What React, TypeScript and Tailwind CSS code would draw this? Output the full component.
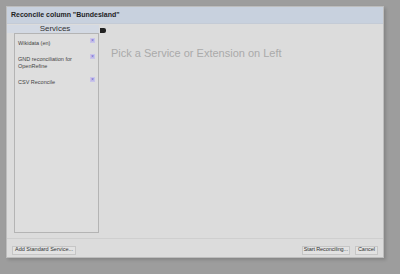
import React from 'react'

const services = [
  { name: 'Wikidata (en)', lines: ['Wikidata (en)'] },
  { name: 'GND', lines: ['GND reconciliation for', 'OpenRefine'] },
  { name: 'CSV', lines: ['CSV Reconcile'] },
]

function RemoveIcon() {
  return (
    <span className="flex h-[5px] w-[5px] items-center justify-center bg-[#c9c4ea] text-[5px] leading-none text-[#6b5fd0]">
      ×
    </span>
  )
}

export default function App() {
  return (
    <div className="h-[274px] w-[400px] overflow-hidden bg-[#9d9d9d] pl-[6px] pt-[6px] font-['Liberation_Sans',Arial,sans-serif]">
      <div className="flex h-[252px] w-[378px] flex-col border border-[#bdbdbd] bg-[#dcdcdc] shadow-[2px_2px_3px_rgba(0,0,0,0.15)]">
        <div className="flex h-[17px] items-center border-b border-[#c4cbd6] bg-[#c8d1de] pl-[4px] pt-[1px] text-[7px] font-bold text-[#1e1e1e]">
          Reconcile column "Bundesland"
        </div>
        <div className="flex flex-1 pt-[1px]">
          <div className="flex w-[92px] flex-col">
            <div className="flex h-[8px] items-center justify-center bg-[#d3d9e3] pl-[4px] text-[8px] leading-none text-[#333]">
              Services
            </div>
            <div className="ml-[7px] flex h-[200px] flex-col border border-[#b4b4b4] bg-[#dedede] px-[3px] pt-[6px] text-[5.5px] leading-[7px] text-[#444]">
              {services.map((s) => (
                <div key={s.name} className="flex justify-between pb-[9px]">
                  <div>
                    {s.lines.map((l) => (
                      <div key={l}>{l}</div>
                    ))}
                  </div>
                  <div className="-mt-[2px]">
                    <RemoveIcon />
                  </div>
                </div>
              ))}
            </div>
          </div>
          <div className="flex flex-1 flex-col">
            <div className="ml-[1px] mt-[3px] h-[5px] w-[6px] rounded-r-[2px] bg-[#222]" />
            <div className="pl-[12px] pt-[12px] text-[11px] text-[#aaa]">
              Pick a Service or Extension on Left
            </div>
          </div>
        </div>
        <div className="flex h-[19px] items-center justify-between border-t border-[#cfcfcf] px-[5px] pt-[4px] text-[5.5px] text-[#333]">
          <button className="h-[9px] border border-[#c6c6c6] bg-[#e2e2e2] px-[2px] leading-none">
            Add Standard Service...
          </button>
          <div className="flex gap-[5px]">
            <button className="h-[9px] border border-[#c6c6c6] bg-[#e2e2e2] px-[1px] leading-none tracking-[-0.1px]">
              Start Reconciling...
            </button>
            <button className="h-[9px] border border-[#c6c6c6] bg-[#e2e2e2] px-[2px] leading-none">
              Cancel
            </button>
          </div>
        </div>
      </div>
    </div>
  )
}
